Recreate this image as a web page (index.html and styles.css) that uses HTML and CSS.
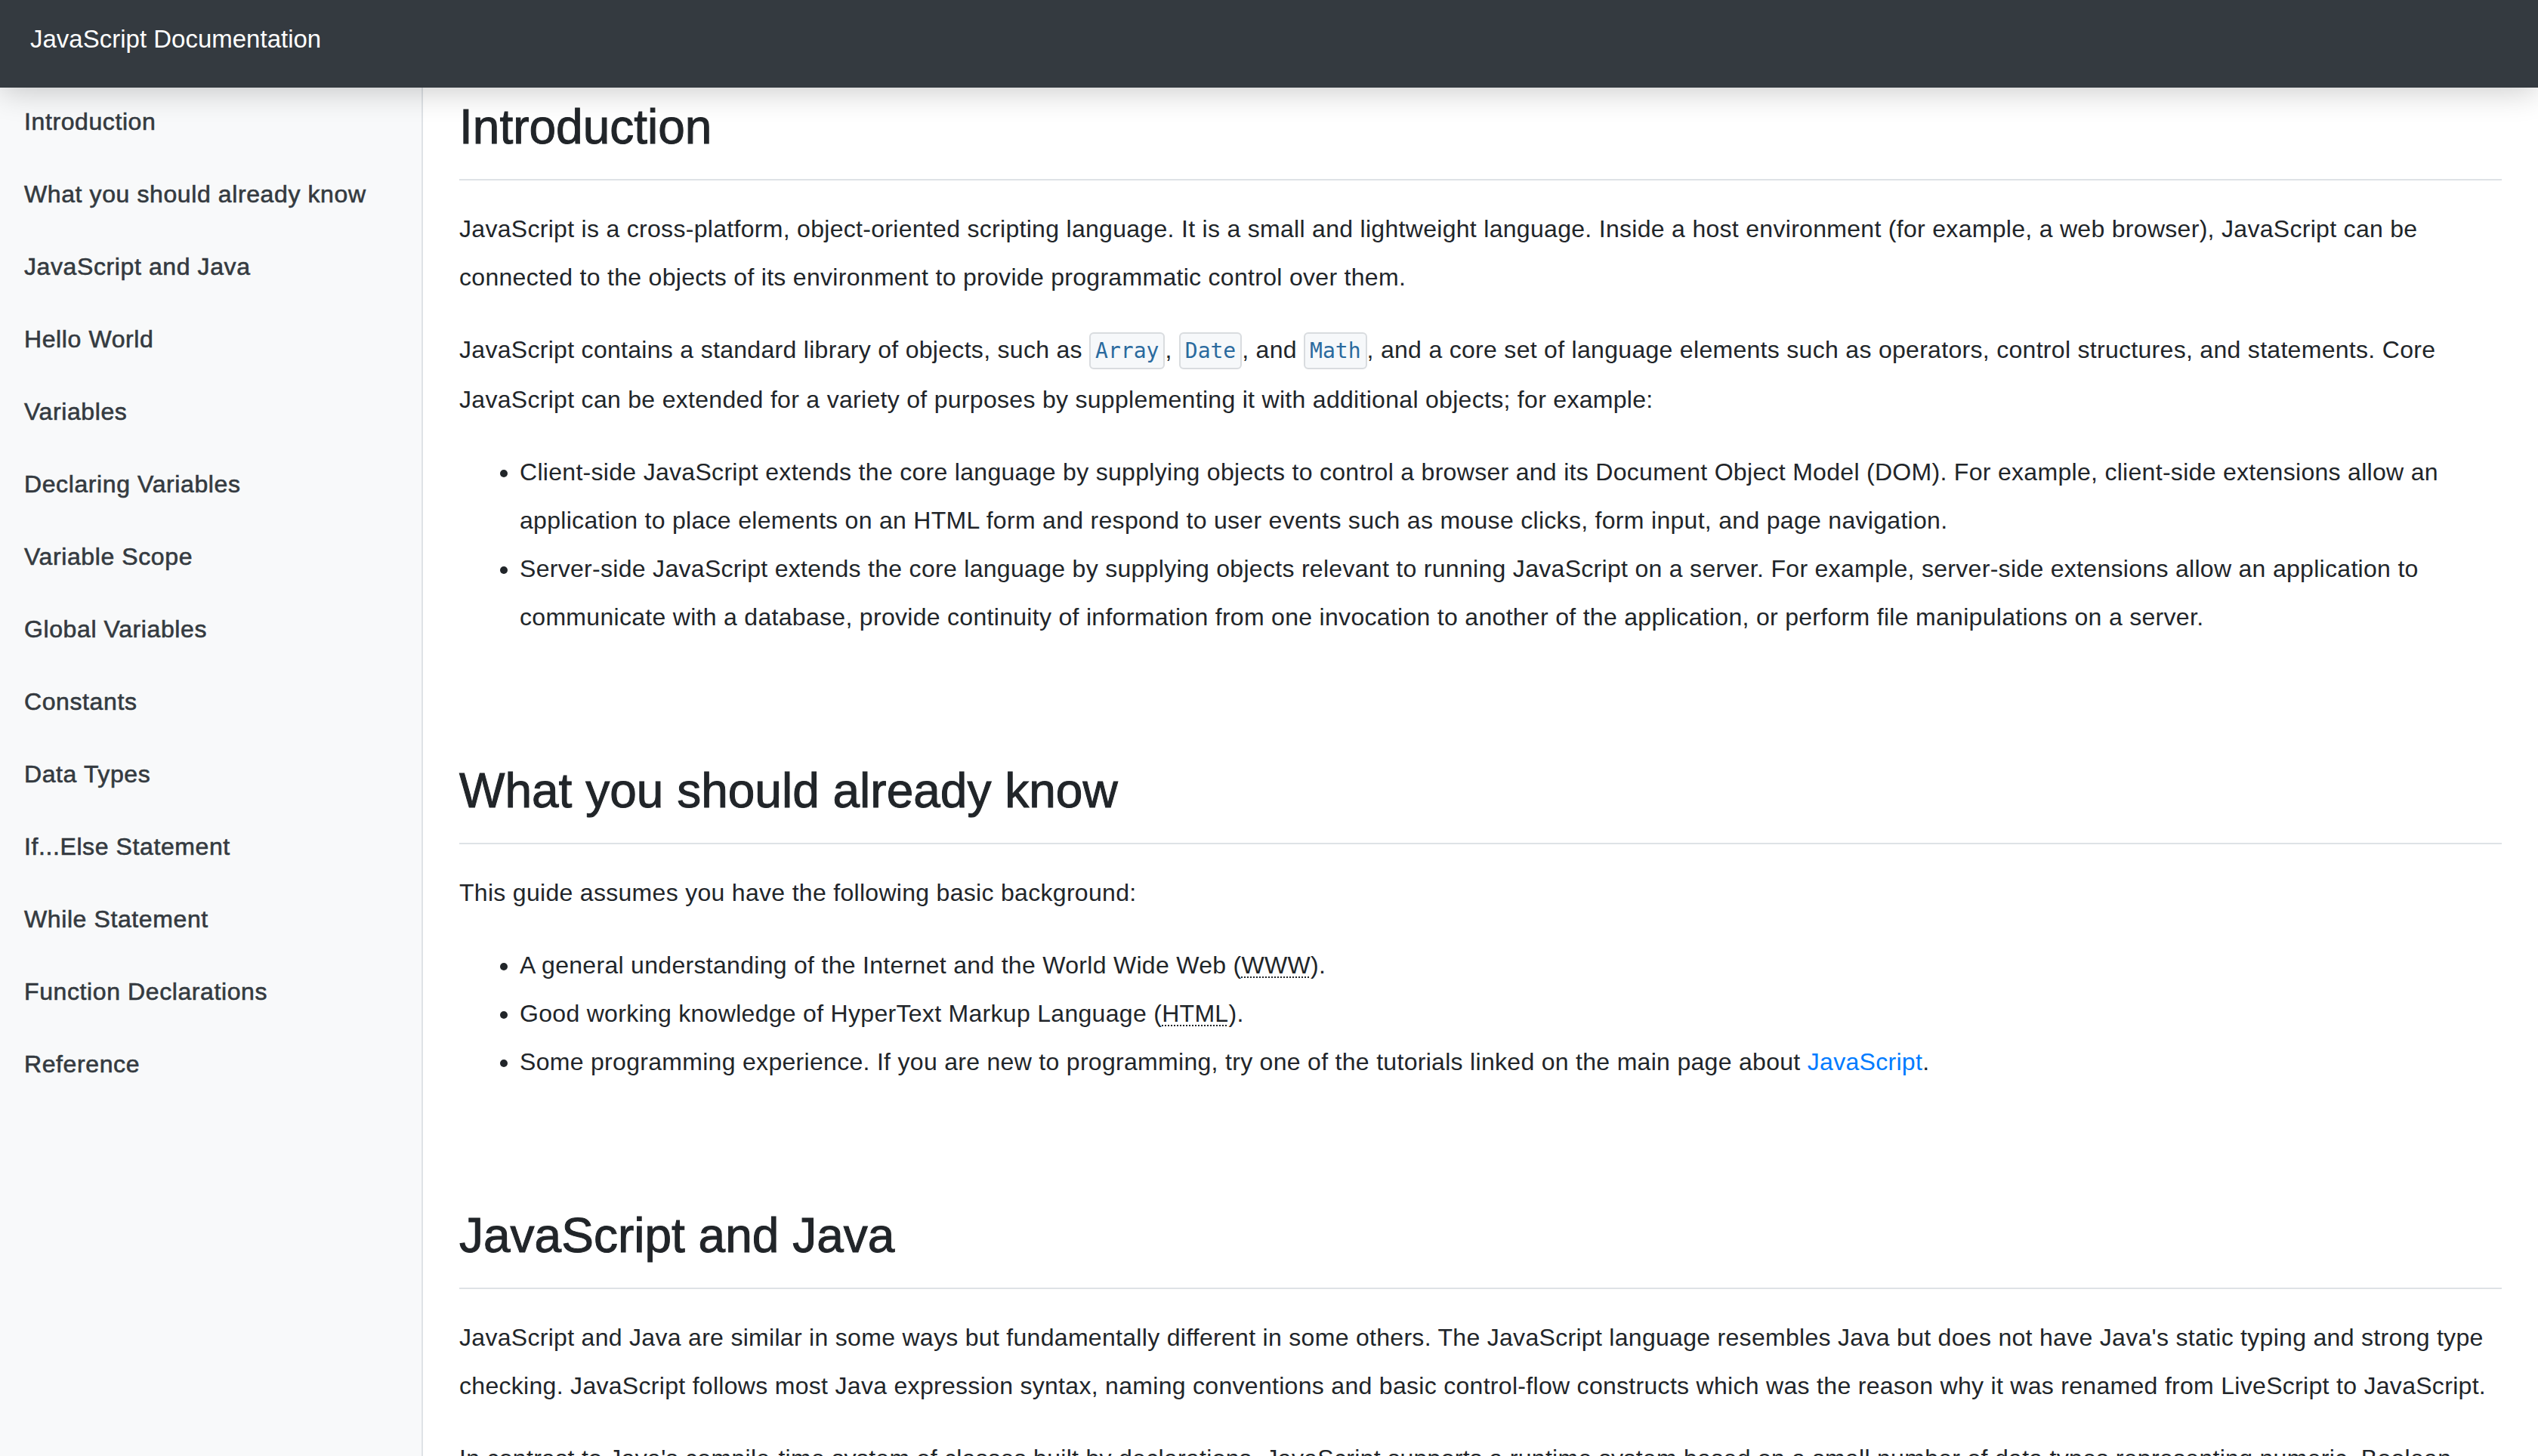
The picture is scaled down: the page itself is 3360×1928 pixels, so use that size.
FILE: index.html
```html
<!DOCTYPE html>
<html lang="en">
<head>
<meta charset="utf-8">
<title>JavaScript Documentation</title>
<link rel="stylesheet" href="styles.css">
</head>
<body>
<header class="topbar">
  <span class="brand">JavaScript Documentation</span>
</header>
<div class="layout">
  <nav class="sidebar" id="navbar">
    <a class="nav-link" href="#Introduction">Introduction</a>
    <a class="nav-link" href="#What_you_should_already_know">What you should already know</a>
    <a class="nav-link" href="#JavaScript_and_Java">JavaScript and Java</a>
    <a class="nav-link" href="#Hello_World">Hello World</a>
    <a class="nav-link" href="#Variables">Variables</a>
    <a class="nav-link" href="#Declaring_Variables">Declaring Variables</a>
    <a class="nav-link" href="#Variable_Scope">Variable Scope</a>
    <a class="nav-link" href="#Global_Variables">Global Variables</a>
    <a class="nav-link" href="#Constants">Constants</a>
    <a class="nav-link" href="#Data_Types">Data Types</a>
    <a class="nav-link" href="#If...Else_Statement">If...Else Statement</a>
    <a class="nav-link" href="#While_Statement">While Statement</a>
    <a class="nav-link" href="#Function_Declarations">Function Declarations</a>
    <a class="nav-link" href="#Reference">Reference</a>
  </nav>
  <main class="content" id="main-doc">
    <section class="doc-section" id="Introduction">
      <h2 class="section-title">Introduction</h2>
      <p>JavaScript is a cross-platform, object-oriented scripting language. It is a small and lightweight language. Inside a host environment (for example, a web browser), JavaScript can be connected to the objects of its environment to provide programmatic control over them.</p>
      <p>JavaScript contains a standard library of objects, such as <code class="code">Array</code>, <code class="code">Date</code>, and <code class="code">Math</code>, and a core set of language elements such as operators, control structures, and statements. Core JavaScript can be extended for a variety of purposes by supplementing it with additional objects; for example:</p>
      <ul class="list">
        <li>Client-side JavaScript extends the core language by supplying objects to control a browser and its Document Object Model (DOM). For example, client-side extensions allow an application to place elements on an HTML form and respond to user events such as mouse clicks, form input, and page navigation.</li>
        <li>Server-side JavaScript extends the core language by supplying objects relevant to running JavaScript on a server. For example, server-side extensions allow an application to communicate with a database, provide continuity of information from one invocation to another of the application, or perform file manipulations on a server.</li>
      </ul>
    </section>
    <section class="doc-section" id="What_you_should_already_know">
      <h2 class="section-title">What you should already know</h2>
      <p>This guide assumes you have the following basic background:</p>
      <ul class="list">
        <li>A general understanding of the Internet and the World Wide Web (<abbr class="abbr" title="World Wide Web">WWW</abbr>).</li>
        <li>Good working knowledge of HyperText Markup Language (<abbr class="abbr" title="HyperText Markup Language">HTML</abbr>).</li>
        <li>Some programming experience. If you are new to programming, try one of the tutorials linked on the main page about <a class="link" href="#">JavaScript</a>.</li>
      </ul>
    </section>
    <section class="doc-section" id="JavaScript_and_Java">
      <h2 class="section-title">JavaScript and Java</h2>
      <p>JavaScript and Java are similar in some ways but fundamentally different in some others. The JavaScript language resembles Java but does not have Java's static typing and strong type checking. JavaScript follows most Java expression syntax, naming conventions and basic control-flow constructs which was the reason why it was renamed from LiveScript to JavaScript.</p>
      <p>In contrast to Java's compile-time system of classes built by declarations, JavaScript supports a runtime system based on a small number of data types representing numeric, Boolean, and string values. JavaScript has a prototype-based object model instead of the more common class-based object model. The prototype-based model provides dynamic inheritance; that is, what is inherited can vary for individual objects. JavaScript also supports functions without any special declarative requirements. Functions can be properties of objects, executing as loosely typed methods.</p>
    </section>
  </main>
</div>
</body>
</html>
```

FILE: styles.css
```css
html, body {
  margin: 0;
  padding: 0;
}

body {
  height: 1928px;
  overflow: hidden;
  background: #ffffff;
  color: #212529;
  font-family: "Liberation Sans", Arial, sans-serif;
  font-size: 32px;
  line-height: 64px;
}

.topbar {
  position: relative;
  z-index: 2;
  height: 116px;
  box-sizing: border-box;
  padding: 28px 40px 0;
  background: #343a40;
  box-shadow: 0 6px 40px rgba(0, 0, 0, 0.2);
}

.brand {
  display: block;
  color: #ffffff;
  font-size: 33px;
  line-height: 48px;
}

.layout {
  display: flex;
  height: 1812px;
}

.sidebar {
  flex: 0 0 560px;
  box-sizing: border-box;
  background: #f8f9fa;
  border-right: 2px solid #dee2e6;
  display: flex;
  flex-direction: column;
}

.nav-link {
  display: block;
  padding: 21px 32px 27px;
  font-size: 32px;
  line-height: 48px;
  letter-spacing: 0.6px;
  color: #343a40;
  -webkit-text-stroke: 0.6px #343a40;
  text-decoration: none;
}

.content {
  flex: 1;
  min-width: 0;
  padding: 14px 48px 0;
  letter-spacing: 0.3px;
}

.doc-section + .doc-section {
  margin-top: 160px;
}

.section-title {
  margin: 0 0 32px;
  padding-bottom: 30px;
  border-bottom: 2px solid #dee2e6;
  font-size: 64px;
  font-weight: 400;
  line-height: 77px;
  letter-spacing: 0;
  color: #212529;
  -webkit-text-stroke: 1px #212529;
}

.content p {
  margin: 0 0 32px;
}

.list {
  margin: 0 0 32px;
  padding-left: 80px;
}

.code {
  font-family: "DejaVu Sans Mono", "Liberation Mono", monospace;
  font-size: 28px;
  letter-spacing: 0;
  color: #2a6a9e;
  background: #f6f8fa;
  border: 2px solid #d9dcdf;
  border-radius: 6px;
  padding: 6px 6px;
}

.abbr {
  text-decoration: underline dotted;
  text-decoration-thickness: 2px;
  text-underline-offset: 4px;
  cursor: help;
}

.link {
  color: #007bff;
  text-decoration: none;
}
```
